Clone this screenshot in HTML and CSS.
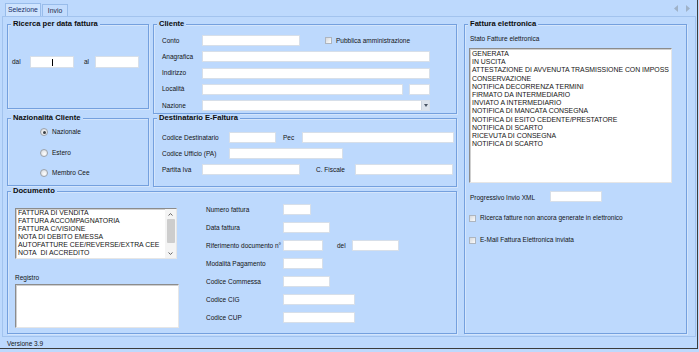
FILE: index.html
```html
<!DOCTYPE html>
<html lang="it">
<head>
<meta charset="utf-8">
<title>Selezione</title>
<link rel="stylesheet" href="styles.css">
</head>
<body>
<div class="window">
  <div class="tabbar">
    <div class="tab active">Selezione</div>
    <div class="tab tab-invio">Invio</div>
    <div class="arrows">
      <svg width="4" height="7" viewBox="0 0 4 7"><path d="M4 0V7L0 3.5Z" fill="#9fb2c8"/></svg>
      <svg width="4" height="7" viewBox="0 0 4 7"><path d="M0 0V7L4 3.5Z" fill="#9fb2c8"/></svg>
    </div>
  </div>

  <div class="page">
    <div class="main">
      <div class="leftcol">
        <div class="toprow">
          <div class="col1">
            <div class="group g-ricerca">
              <div class="gtitle">Ricerca per data fattura</div>
              <div class="row r-dal">
                <span class="lbl w18">dal</span>
                <span class="inp w44 caret"><i></i></span>
                <span class="lbl w11 ml10">al</span>
                <span class="inp w44"></span>
              </div>
            </div>
            <div class="group g-naz">
              <div class="gtitle">Nazionalità Cliente</div>
              <div class="radios">
                <div class="ropt"><span class="radio on"><b></b></span>Nazionale</div>
                <div class="ropt"><span class="radio"></span>Estero</div>
                <div class="ropt"><span class="radio"></span>Membro Cee</div>
              </div>
            </div>
          </div>

          <div class="col2">
            <div class="group g-cliente">
              <div class="gtitle">Cliente</div>
              <div class="form f-cliente">
                <div class="row">
                  <span class="lbl w40">Conto</span>
                  <span class="inp w98"></span>
                  <span class="check ml25"></span>
                  <span class="lbl ml4">Pubblica amministrazione</span>
                </div>
                <div class="row"><span class="lbl w40">Anagrafica</span><span class="inp w228"></span></div>
                <div class="row"><span class="lbl w40">Indirizzo</span><span class="inp w228"></span></div>
                <div class="row">
                  <span class="lbl w40">Località</span>
                  <span class="inp w201"></span>
                  <span class="inp w21 ml6"></span>
                </div>
                <div class="row">
                  <span class="lbl w40">Nazione</span>
                  <span class="inp combo w228"><span class="combo-btn"><svg width="4" height="3" viewBox="0 0 4 3"><path d="M0 0H4L2 3Z" fill="#4a5564"/></svg></span></span>
                </div>
              </div>
            </div>

            <div class="group g-dest">
              <div class="gtitle">Destinatario E-Faltura</div>
              <div class="form f-dest">
                <div class="row">
                  <span class="lbl w67">Codice Destinatario</span>
                  <span class="inp w47"></span>
                  <span class="lbl w19 ml7">Pec</span>
                  <span class="inp w152"></span>
                </div>
                <div class="row">
                  <span class="lbl w67">Codice Ufficio (PA)</span>
                  <span class="inp w114"></span>
                </div>
                <div class="row">
                  <span class="lbl w40">Partita Iva</span>
                  <span class="inp w98"></span>
                  <span class="lbl w39 ml16">C. Fiscale</span>
                  <span class="inp w98"></span>
                </div>
              </div>
            </div>
          </div>
        </div>

        <div class="group g-doc">
          <div class="gtitle">Documento</div>
          <div class="doc-body">
            <div class="doc-left">
              <div class="listbox doclist">
                <div class="items">
                  <div>FATTURA DI VENDITA</div>
                  <div>FATTURA ACCOMPAGNATORIA</div>
                  <div>FATTURA C/VISIONE</div>
                  <div>NOTA DI DEBITO EMESSA</div>
                  <div>AUTOFATTURE CEE/REVERSE/EXTRA CEE</div>
                  <div>NOTA&nbsp; DI ACCREDITO</div>
                </div>
                <div class="vscroll">
                  <span class="sbtn"><svg width="5" height="3" viewBox="0 0 5 3"><path d="M0.5 2.5L2.5 0.6L4.5 2.5" fill="none" stroke="#555" stroke-width="0.9"/></svg></span>
                  <span class="thumb"></span>
                  <span class="sbtn sbtn-down"><svg width="5" height="3" viewBox="0 0 5 3"><path d="M0.5 0.5L2.5 2.4L4.5 0.5" fill="none" stroke="#555" stroke-width="0.9"/></svg></span>
                </div>
              </div>
              <div class="lbl reg-lbl">Registro</div>
              <div class="textbox"></div>
            </div>
            <div class="doc-right">
              <div class="row"><span class="lbl w77">Numero fattura</span><span class="inp w28"></span></div>
              <div class="row"><span class="lbl w77">Data fattura</span><span class="inp w47"></span></div>
              <div class="row">
                <span class="lbl w77">Riferimento documento n°</span>
                <span class="inp w40"></span>
                <span class="lbl w15 ml14">del</span>
                <span class="inp w47"></span>
              </div>
              <div class="row"><span class="lbl w77">Modalità Pagamento</span><span class="inp w40"></span></div>
              <div class="row"><span class="lbl w77">Codice Commessa</span><span class="inp w47"></span></div>
              <div class="row"><span class="lbl w77">Codice CIG</span><span class="inp w72"></span></div>
              <div class="row"><span class="lbl w77">Codice CUP</span><span class="inp w72"></span></div>
            </div>
          </div>
        </div>
      </div>

      <div class="group g-fe">
        <div class="gtitle">Fattura elettronica</div>
        <div class="fe-body">
          <div class="lbl">Stato Fatture elettronica</div>
          <div class="listbox felist">
            <div class="items">
              <div>GENERATA</div>
              <div>IN USCITA</div>
              <div>ATTESTAZIONE DI AVVENUTA TRASMISSIONE CON IMPOSS</div>
              <div>CONSERVAZIONE</div>
              <div>NOTIFICA DECORRENZA TERMINI</div>
              <div>FIRMATO DA INTERMEDIARIO</div>
              <div>INVIATO A INTERMEDIARIO</div>
              <div>NOTIFICA DI MANCATA CONSEGNA</div>
              <div>NOTIFICA DI ESITO CEDENTE/PRESTATORE</div>
              <div>NOTIFICA DI SCARTO</div>
              <div>RICEVUTA DI CONSEGNA</div>
              <div>NOTIFICA DI SCARTO</div>
            </div>
          </div>
          <div class="row prog-row">
            <span class="lbl w80">Progressivo Invio XML</span>
            <span class="inp w52"></span>
          </div>
          <div class="crow crow1"><span class="check"></span><span class="lbl">Ricerca fatture non ancora generate in elettronico</span></div>
          <div class="crow crow2"><span class="check"></span><span class="lbl">E-Mail Fattura Elettronica inviata</span></div>
        </div>
      </div>
    </div>
  </div>

  <div class="status">Versione 3.9</div>
</div>
</body>
</html>
```

FILE: styles.css
```css
* { box-sizing: border-box; }

body {
  margin: 0;
  background: #BDD9FD;
  font-family: "Liberation Sans", Arial, sans-serif;
  font-size: 6.5px;
  line-height: 8px;
  color: #141414;
}

.window {
  width: 698px;
  height: 349px;
  border-right: 1px solid #3c3c3c;
  border-bottom: 1px solid #3c3c3c;
  display: flex;
  flex-direction: column;
}

/* tabs */
.tabbar {
  height: 16px;
  display: flex;
  align-items: flex-end;
  padding-left: 5px;
  padding-right: 7px;
}
.tab {
  height: 12px;
  line-height: 11px;
  padding: 0 5px;
  border: 1px solid #98BCEA;
  border-bottom: 0;
  background: #C3DCFD;
  font-size: 6.8px;
  color: #1b2a4a;
}
.tab.active {
  height: 13px;
  padding: 0 2px;
  background: #CFE4FE;
  color: #1a2f6a;
}
.tab-invio { margin-left: 1px; }
.arrows {
  margin-left: auto;
  align-self: center;
  display: flex;
  gap: 8px;
  margin-top: 1px;
}
.arrows svg { display: block; }

/* page */
.page {
  margin-left: 2px;
  width: 694px;
  height: 321px;
  border: 1px solid #A2C3EE;
  padding: 7px 0 0 4px;
}
.main { display: flex; gap: 7px; }
.leftcol { width: 450px; display: flex; flex-direction: column; gap: 4px; }
.toprow { display: flex; gap: 4px; }
.col1 { width: 142px; display: flex; flex-direction: column; gap: 9px; }
.col2 { width: 304px; display: flex; flex-direction: column; gap: 4px; }

/* group boxes */
.group {
  border: 1px solid #74A0DE;
  box-shadow: inset 1px 1px 0 #D4E5FB, 1px 1px 0 #D4E5FB;
}
.gtitle {
  display: block;
  width: max-content;
  margin: -5px 0 0 3px;
  padding: 0 2px;
  height: 8px;
  line-height: 8px;
  font-weight: bold;
  font-size: 7.6px;
  background: #BDD9FD;
  color: #0c0c0c;
}
.g-ricerca { height: 85px; }
.g-naz { height: 68px; }
.g-cliente { height: 90px; }
.g-dest { height: 69px; }
.g-doc { height: 143px; }
.g-fe { width: 223px; height: 310px; }

/* generic rows / controls */
.row { display: flex; align-items: center; height: 11px; }
.lbl { white-space: nowrap; line-height: 8px; }
.inp {
  display: block;
  height: 11px;
  background: #fff;
  border: 1px solid #D7DFE9;
  flex: none;
}
.check {
  display: block;
  flex: none;
  width: 7px;
  height: 7px;
  border: 1px solid #ADB5BF;
  background: linear-gradient(135deg, #d6d9dd, #fbfbfb);
}
.radio {
  display: flex;
  align-items: center;
  justify-content: center;
  flex: none;
  width: 8px;
  height: 8px;
  border-radius: 50%;
  border: 1px solid #9da3aa;
  background: radial-gradient(circle at 60% 65%, #fdfdfd 0, #e4e6e9 60%, #cfd3d8 100%);
}
.radio b { display: block; width: 3px; height: 3px; border-radius: 50%; background: #3a3f46; }

.w11 { width: 11px; } .w15 { width: 15px; } .w18 { width: 18px; } .w19 { width: 19px; }
.w21 { width: 21px; } .w28 { width: 28px; } .w39 { width: 39px; } .w40 { width: 40px; }
.w44 { width: 44px; } .w47 { width: 47px; } .w52 { width: 52px; } .w67 { width: 67px; }
.w72 { width: 72px; } .w77 { width: 77px; } .w80 { width: 80px; } .w98 { width: 98px; }
.w114 { width: 114px; } .w152 { width: 152px; } .w201 { width: 201px; } .w228 { width: 228px; }
.ml4 { margin-left: 4px; } .ml6 { margin-left: 6px; } .ml7 { margin-left: 7px; }
.ml10 { margin-left: 10px; } .ml14 { margin-left: 14px; } .ml16 { margin-left: 16px; } .ml25 { margin-left: 25px; }

/* ricerca */
.r-dal { margin-top: 28px; padding-left: 4px; height: 12px; }
.r-dal .inp { height: 12px; }
.caret { display: flex; align-items: center; justify-content: center; }
.caret i { display: block; width: 1px; height: 7px; background: #000; }

/* nazionalita */
.radios { padding-left: 32px; }
.ropt { display: flex; align-items: center; gap: 4px; height: 20.5px; }

/* cliente */
.form { display: flex; flex-direction: column; padding-left: 8px; }
.f-cliente { padding-top: 7px; gap: 5.25px; }
.f-dest { padding-top: 10px; gap: 5px; }
.combo { display: flex; justify-content: flex-end; }
.combo-btn {
  width: 8px;
  height: 100%;
  background: #DCE3EC;
  border-left: 1px solid #CBD4DF;
  display: flex;
  align-items: center;
  justify-content: center;
}
.combo-btn svg { display: block; }

/* documento */
.doc-body { display: flex; padding-left: 7px; }
.doc-left { width: 164px; padding-top: 13px; }
.listbox {
  background: #fff;
  border: 1px solid;
  border-color: #8c8c8c #e6e6e6 #e6e6e6 #8c8c8c;
  box-shadow: inset 1px 1px 0 #cfcfcf;
  color: #151515;
}
.items div { white-space: nowrap; line-height: 8px; height: 8px; font-size: 6.9px; }
.felist .items div { line-height: 8.2px; height: 8.2px; }
.doclist { width: 162px; height: 51px; display: flex; }
.doclist .items { flex: 1; padding: 0 0 0 2px; overflow: hidden; }
.vscroll {
  width: 11px;
  display: flex;
  flex-direction: column;
  align-items: center;
  background: #F4F4F4;
}
.sbtn { height: 10px; display: flex; align-items: center; justify-content: center; }
.sbtn svg { display: block; }
.sbtn-down { margin-top: auto; }
.thumb { width: 8px; height: 24px; background: #CDCDCD; border-radius: 1px; }
.reg-lbl { margin-top: 15px; height: 8px; }
.textbox {
  margin-top: 2px;
  width: 164px;
  height: 44px;
  background: #fff;
  border: 1px solid;
  border-color: #8c8c8c #e6e6e6 #e6e6e6 #8c8c8c;
  box-shadow: inset 1px 1px 0 #cfcfcf;
}
.doc-right { margin-left: 27px; padding-top: 9px; display: flex; flex-direction: column; gap: 7px; }

/* fattura elettronica */
.fe-body { padding: 7px 0 0 5px; }
.felist { margin: 5px 0 0 -1px; width: 203px; height: 135px; }
.felist .items { padding: 1px 0 0 2px; }
.prog-row { margin-top: 8px; align-items: flex-end; }
.crow { display: flex; align-items: center; gap: 4px; height: 8px; margin-left: -1px; }
.crow1 { margin-top: 12px; }
.crow2 { margin-top: 14px; }

/* status */
.status { flex: 1; padding: 3px 0 0 7px; line-height: 8px; }
```
